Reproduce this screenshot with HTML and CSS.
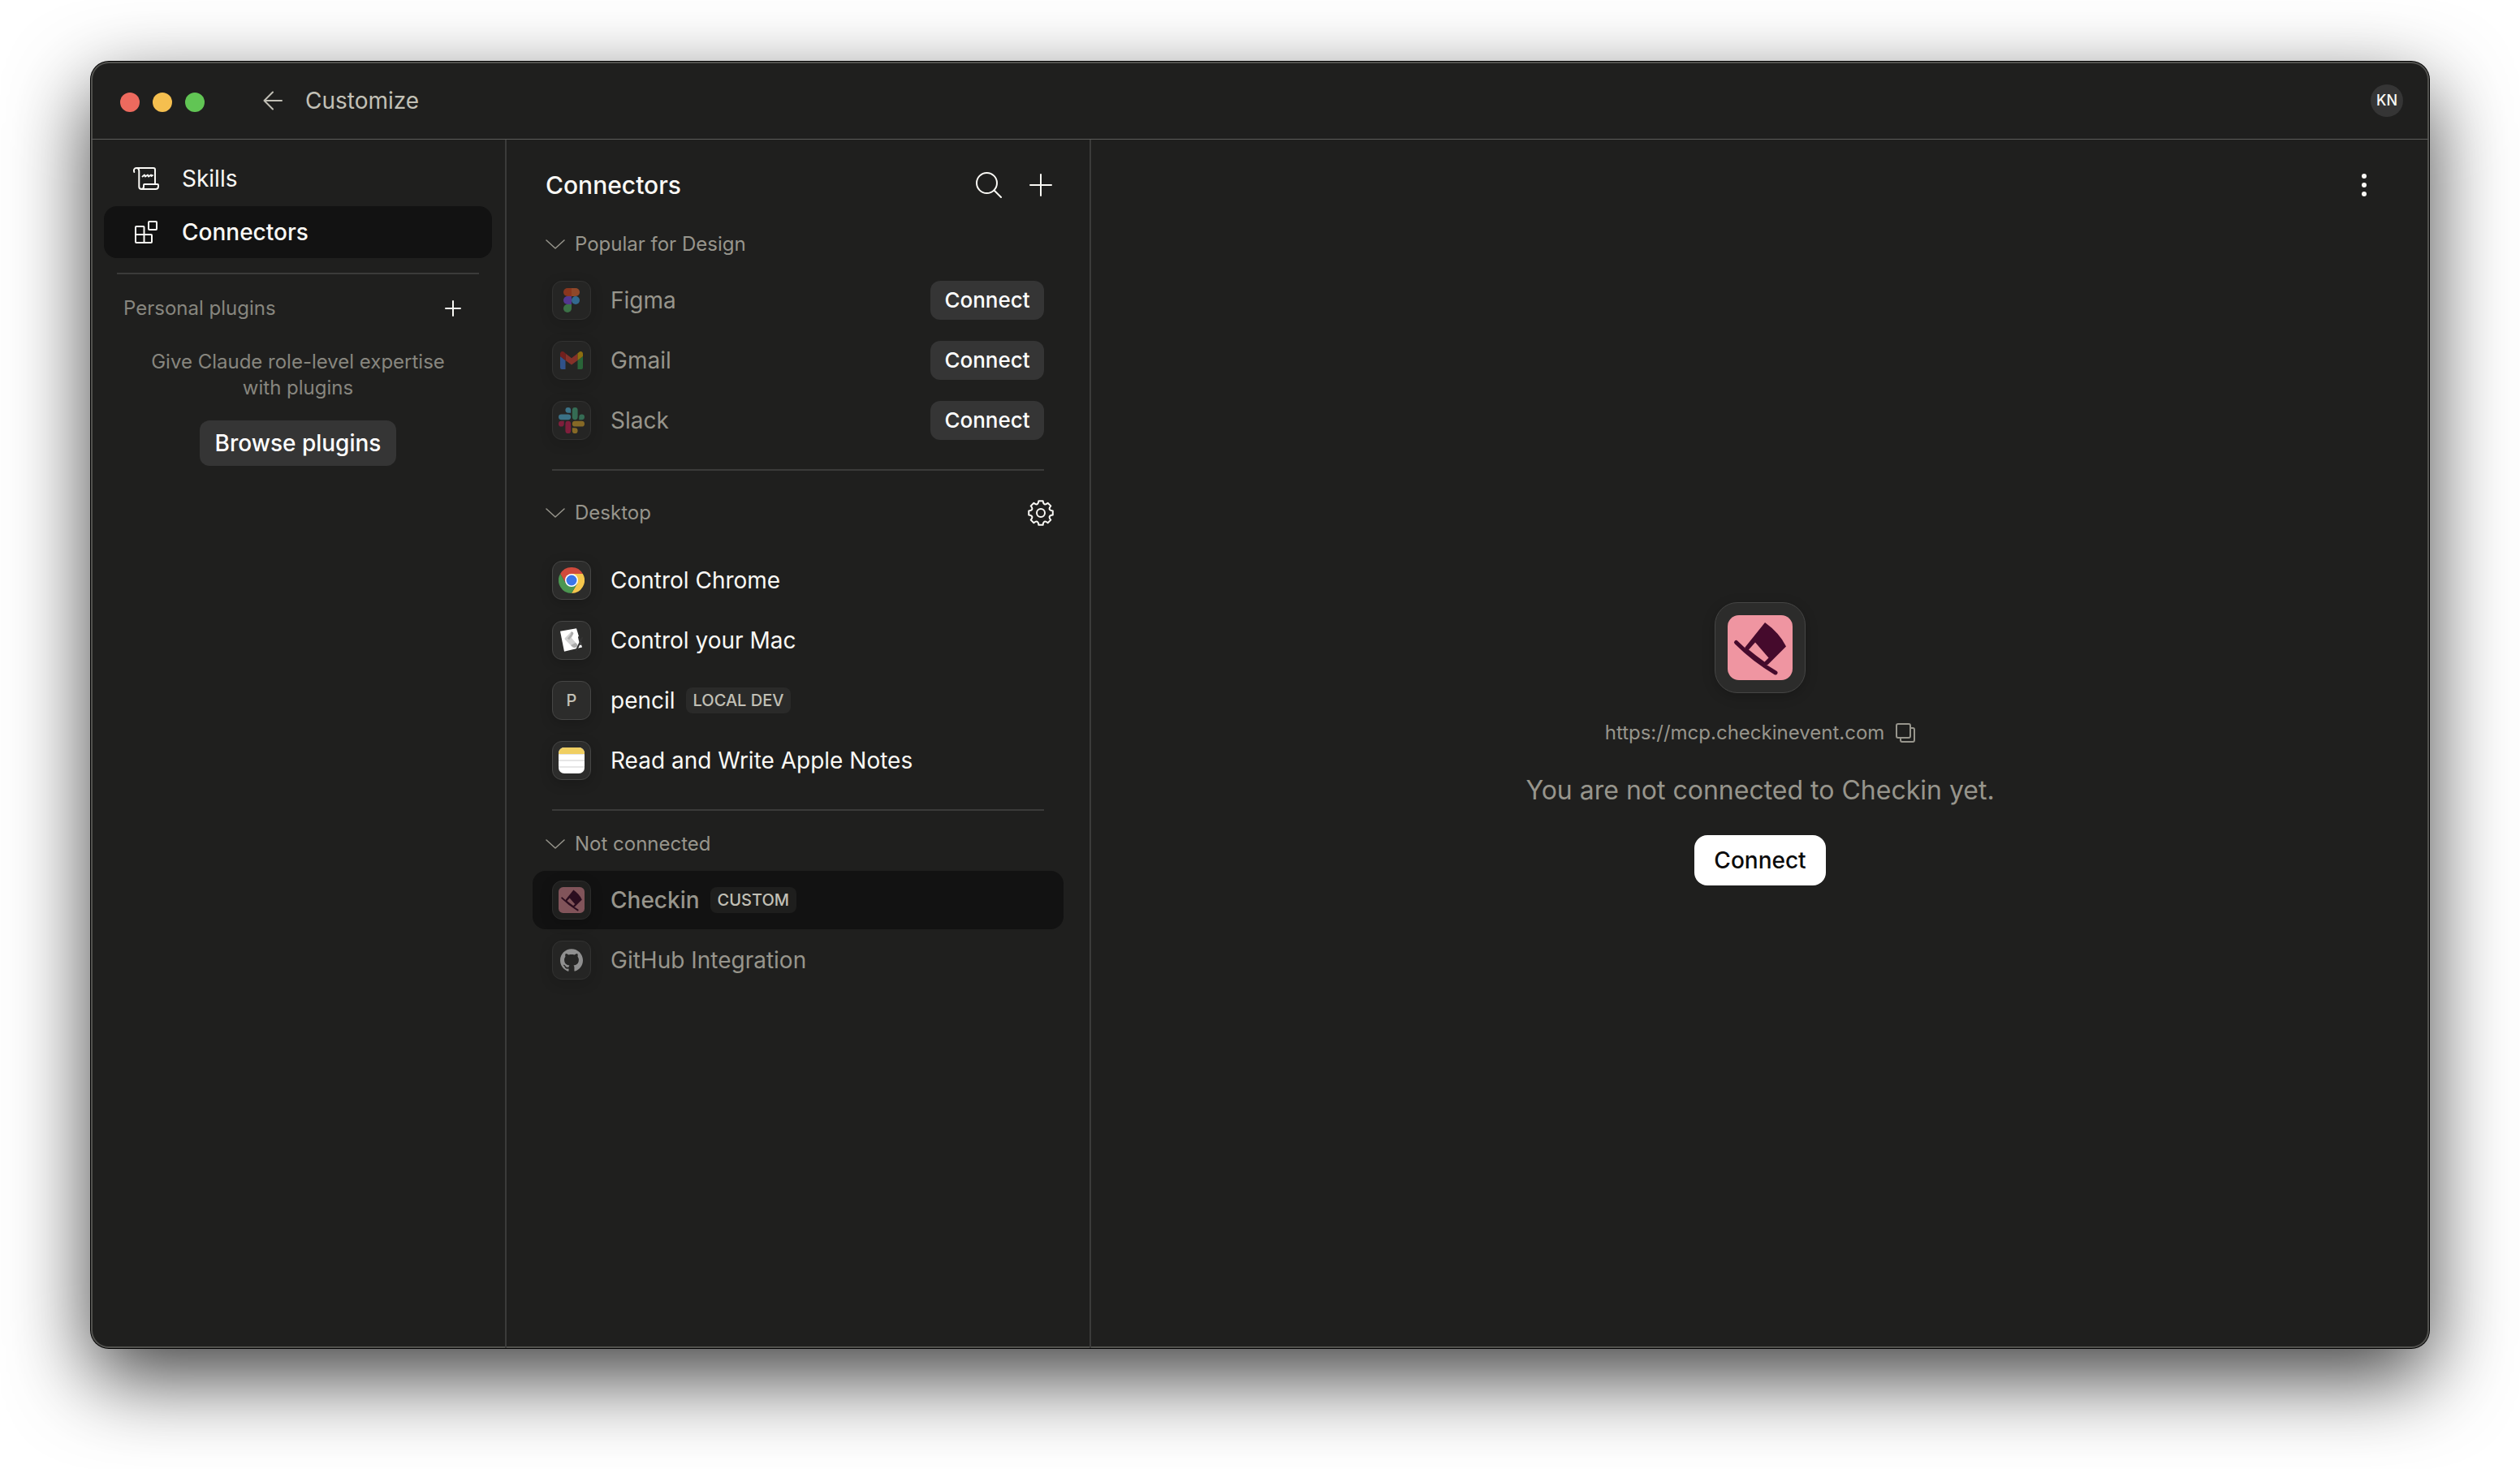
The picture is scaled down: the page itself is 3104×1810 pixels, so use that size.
FILE: index.html
```html
<!DOCTYPE html>
<html lang="en">
<head>
<meta charset="utf-8">
<meta name="viewport" content="width=device-width, initial-scale=1">
<title>Customize</title>
<link rel="stylesheet" href="styles.css">
</head>
<body>
<div class="window">
  <header class="titlebar">
    <div class="lights" aria-hidden="true">
      <span class="light light-close"></span>
      <span class="light light-minimize"></span>
      <span class="light light-zoom"></span>
    </div>
    <button class="icon-button back" aria-label="Back">
      <svg width="24" height="24" viewBox="0 0 24 24"><path d="M23 12H1.5M12 1.5 1.5 12 12 22.500" stroke-width="2"/></svg>
    </button>
    <h1 class="window-title">Customize</h1>
    <button class="avatar" aria-label="Account">KN</button>
  </header>

  <div class="panes">
    <nav class="sidebar" aria-label="Customize">
      <ul class="nav-list">
        <li><a class="nav-item" href="#skills">
          <svg width="32" height="32" viewBox="0 0 32 32"><path d="M1.300 8C.4 5 1.500 3 4 3H25a2 2 0 0 1 2 2V22.500M4 3C6.500 3 7.300 4.500 7.300 7V26a3 3 0 0 0 3 3H27.500C30 29 31 27.500 31 25.500V24a1 1 0 0 0-1-1H14a1 1 0 0 0-1 1V26a3 3 0 0 1-3 3" stroke-width="2"/><path d="M11.500 13.500l2.500-2 1 2 3-2 1 2 3-2 .5 1.500 1.500-1" stroke-width="2"/></svg>
          Skills</a></li>
        <li><a class="nav-item is-active" href="#connectors" aria-current="page">
          <svg width="32" height="32" viewBox="0 0 32 32"><path d="M4 9h8.500a1 1 0 0 1 1 1v9H22a1 1 0 0 1 1 1v8a1 1 0 0 1-1 1H4a1 1 0 0 1-1-1V10a1 1 0 0 1 1-1zM3 19h10.500v10" stroke-width="2"/><rect x="19" y="3" width="10" height="10" rx="1" stroke-width="2"/></svg>
          Connectors</a></li>
      </ul>
      <hr class="rule">
      <div class="plugins-head">
        <h2 class="label">Personal plugins</h2>
        <button class="icon-button" aria-label="Add plugin"><svg width="20" height="20" viewBox="0 0 20 20"><path d="M10 1v18M1 10h18" stroke-width="2"/></svg></button>
      </div>
      <div class="plugins-empty">
        <p>Give Claude role-level expertise with plugins</p>
        <button class="button button-browse">Browse plugins</button>
      </div>
    </nav>

    <section class="connectors" aria-labelledby="connectors-title">
      <header class="pane-head">
        <h2 class="pane-title" id="connectors-title">Connectors</h2>
        <div class="actions">
          <button class="icon-button" aria-label="Search"><svg width="32" height="32" viewBox="0 0 32 32"><circle cx="13.500" cy="13.500" r="12.500" stroke-width="2"/><path d="M22.500 22.500 31 31" stroke-width="2"/></svg></button>
          <button class="icon-button" aria-label="Add connector"><svg width="32" height="32" viewBox="0 0 32 32"><path d="M16 3v26M3 16h26" stroke-width="2"/></svg></button>
        </div>
      </header>

      <div class="group">
        <div class="group-head">
          <button class="toggle" aria-expanded="true"><svg width="24" height="24" viewBox="0 0 24 24"><path d="M1 7 12 17 23 7" stroke-width="1.500"/></svg>Popular for Design</button>
        </div>
        <ul class="rows">
          <li class="row is-off">
            <span class="tile"><svg width="20" height="30" viewBox="0 0 20 30"><g stroke="none"><path fill="#f24e1e" d="M5 0h5v10H5A5 5 0 0 1 5 0z"/><path fill="#ff7237" d="M10 0h5a5 5 0 0 1 0 10h-5z"/><path fill="#874fff" d="M5 10h5v10H5a5 5 0 0 1 0-10z"/><circle fill="#47b2ff" cx="15" cy="15" r="5"/><path fill="#58c26e" d="M5 20h5v5a5 5 0 1 1-5-5z"/></g></svg></span>
            <a class="name" href="#figma">Figma</a><button class="button button-small">Connect</button>
          </li>
          <li class="row is-off">
            <span class="tile"><svg width="28" height="22" viewBox="0 0 28 22"><g stroke="none"><path fill="#4285f4" d="M0 6l6.500 5V22H2a2 2 0 0 1-2-2z"/><path fill="#34a853" d="M28 6l-6.500 5V22H26a2 2 0 0 0 2-2z"/><path fill="#ea4335" d="M6.500 2.500 14 8.300l7.500-5.800V11L14 16.500 6.500 11z"/><path fill="#c5221f" d="M0 3C0 .2 3-.8 5 1l1.500 1.500V11L0 6z"/><path fill="#fbbc04" d="M28 3C28 .2 25-.8 23 1l-1.500 1.500V11L28 6z"/></g></svg></span>
            <a class="name" href="#gmail">Gmail</a><button class="button button-small">Connect</button>
          </li>
          <li class="row is-off">
            <span class="tile"><svg width="32" height="32" viewBox="0 0 24 24"><g stroke="none"><path fill="#e01e5a" d="M5.042 15.165a2.528 2.528 0 0 1-2.520 2.523A2.528 2.528 0 0 1 0 15.165a2.527 2.527 0 0 1 2.522-2.520h2.520v2.520zM6.313 15.165a2.527 2.527 0 0 1 2.521-2.520 2.527 2.527 0 0 1 2.521 2.520v6.313A2.528 2.528 0 0 1 8.834 24a2.528 2.528 0 0 1-2.521-2.522v-6.313z"/><path fill="#57c4f0" d="M8.834 5.042a2.528 2.528 0 0 1-2.521-2.520A2.528 2.528 0 0 1 8.834 0a2.528 2.528 0 0 1 2.521 2.522v2.520H8.834zM8.834 6.313a2.528 2.528 0 0 1 2.521 2.521 2.528 2.528 0 0 1-2.521 2.521H2.522A2.528 2.528 0 0 1 0 8.834a2.528 2.528 0 0 1 2.522-2.521h6.312z"/><path fill="#4cb98a" d="M18.956 8.834a2.528 2.528 0 0 1 2.522-2.521A2.528 2.528 0 0 1 24 8.834a2.528 2.528 0 0 1-2.522 2.521h-2.522V8.834zM17.688 8.834a2.528 2.528 0 0 1-2.523 2.521 2.527 2.527 0 0 1-2.520-2.521V2.522A2.527 2.527 0 0 1 15.165 0a2.528 2.528 0 0 1 2.523 2.522v6.312z"/><path fill="#ecb22e" d="M15.165 18.956a2.528 2.528 0 0 1 2.523 2.522A2.528 2.528 0 0 1 15.165 24a2.527 2.527 0 0 1-2.520-2.522v-2.522h2.520zM15.165 17.688a2.527 2.527 0 0 1-2.520-2.523 2.526 2.526 0 0 1 2.520-2.520h6.313A2.527 2.527 0 0 1 24 15.165a2.528 2.528 0 0 1-2.522 2.523h-6.313z"/></g></svg></span>
            <a class="name" href="#slack">Slack</a><button class="button button-small">Connect</button>
          </li>
        </ul>
      </div>

      <hr class="rule">

      <div class="group">
        <div class="group-head group-head-tall">
          <button class="toggle" aria-expanded="true"><svg width="24" height="24" viewBox="0 0 24 24"><path d="M1 7 12 17 23 7" stroke-width="1.500"/></svg>Desktop</button>
          <button class="icon-button" aria-label="Desktop settings"><svg width="32" height="32" viewBox="0 0 32 32"><path d="M13.400 1.200h5.200C18.900 4 19.200 4.700 20.600 5.300 22 5.800 22.600 5.400 24.600 3.700L28.300 7.400C26.600 9.400 26.200 10 26.700 11.400 27.300 12.800 28 13.100 30.800 13.400v5.200C28 18.900 27.300 19.200 26.700 20.600 26.200 22 26.600 22.600 28.300 24.600L24.600 28.300C22.600 26.600 22 26.200 20.600 26.700 19.200 27.300 18.900 28 18.600 30.800h-5.200C13.100 28 12.800 27.300 11.400 26.700 10 26.200 9.400 26.600 7.400 28.300L3.700 24.600C5.400 22.600 5.800 22 5.300 20.600 4.700 19.200 4 18.900 1.200 18.600v-5.200C4 13.100 4.700 12.800 5.300 11.400 5.800 10 5.400 9.400 3.700 7.400L7.400 3.700C9.400 5.400 10 5.800 11.400 5.300 12.800 4.700 13.100 4 13.400 1.200z" stroke-width="2"/><circle cx="16" cy="16" r="5" stroke-width="2"/></svg></button>
        </div>
        <ul class="rows">
          <li class="row">
            <span class="tile"><svg width="32" height="32" viewBox="0 0 32 32"><g stroke="none"><path fill="#d04a3c" d="M2.140 8A16 16 0 0 1 29.860 8H16V16L9.070 20z"/><path fill="#f4c64c" d="M16 8H29.860A16 16 0 0 1 16 32L22.930 20 16 16z"/><path fill="#4b9650" d="M2.140 8 9.070 20 16 16 22.930 20 16 32A16 16 0 0 1 2.140 8z"/></g><circle cx="16" cy="16" r="8" fill="#fff" stroke="none"/><circle cx="16" cy="16" r="6.500" fill="#3b76e8" stroke="none"/></svg></span>
            <a class="name" href="#control-chrome">Control Chrome</a>
          </li>
          <li class="row">
            <span class="tile"><svg width="32" height="32" viewBox="0 0 32 32"><g stroke="none"><path fill="#fff" d="M2 4.700 22 1.300 29 24.500 7 29.700z"/><path fill="#d2d2d2" d="M15.500 5.500c2-.5 3.500 1 2.500 3l-2 4.500 7 8c1 2-1 4-4 4-2 0-3-1-4-3l-6-6c-2-1-2-3 0-4z"/><path fill="#9b9b9b" d="M15.500 5.500c2-.5 3.500 1 2.500 3l-5 7-2-2 4-5zM15 22l6-3 2 2c1 2-1 4-4 4z" opacity=".7"/></g><path stroke="#333" stroke-width="2" d="M29 13 22 28M25 12l2 9"/></svg></span>
            <a class="name" href="#control-mac">Control your Mac</a>
          </li>
          <li class="row">
            <span class="tile">P</span>
            <a class="name" href="#pencil">pencil</a><span class="badge">LOCAL DEV</span>
          </li>
          <li class="row">
            <span class="tile"><svg width="32" height="32" viewBox="0 0 32 32"><g stroke="none"><rect width="32" height="32" rx="7" fill="#fff"/><path fill="#f0cf62" d="M0 8V7a7 7 0 0 1 7-7h18a7 7 0 0 1 7 7v1z"/><path fill="#e6e6e6" d="M0 8h32v1H0zM0 15h32v2H0zM0 23h32v2H0z"/></g></svg></span>
            <a class="name" href="#apple-notes">Read and Write Apple Notes</a>
          </li>
        </ul>
      </div>

      <hr class="rule">

      <div class="group">
        <div class="group-head">
          <button class="toggle" aria-expanded="true"><svg width="24" height="24" viewBox="0 0 24 24"><path d="M1 7 12 17 23 7" stroke-width="1.500"/></svg>Not connected</button>
        </div>
        <ul class="rows">
          <li class="row is-off is-active">
            <span class="tile"><svg width="32" height="32" viewBox="0 0 80 80"><rect width="80" height="80" rx="14" fill="#ef95a1" stroke="none"/><path fill="#450a2c" stroke="none" d="M46 9Q64 22 72 38.500L49.500 61 44 62 21.500 43V39.500z"/><path fill="#ef95a1" stroke="none" d="M34 33.500 50.500 52.500 45.500 57.500Q35 50 26 42.500z"/><path stroke="#450a2c" stroke-width="5" d="M10.500 33.500Q32 55 59 71"/></svg></span>
            <a class="name" href="#checkin" aria-current="true">Checkin</a><span class="badge">CUSTOM</span>
          </li>
          <li class="row is-off">
            <span class="tile"><svg width="28" height="28" viewBox="0 0 24 24"><path fill="#fff" stroke="none" d="M12 .297c-6.630 0-12 5.373-12 12 0 5.303 3.438 9.800 8.205 11.385.6.113.82-.258.82-.577 0-.285-.01-1.040-.015-2.040-3.338.724-4.042-1.610-4.042-1.610C4.422 18.070 3.633 17.700 3.633 17.700c-1.087-.744.084-.729.084-.729 1.205.084 1.838 1.236 1.838 1.236 1.070 1.835 2.809 1.305 3.495.998.108-.776.417-1.305.76-1.605-2.665-.3-5.466-1.332-5.466-5.930 0-1.310.465-2.380 1.235-3.220-.135-.303-.54-1.523.105-3.176 0 0 1.005-.322 3.300 1.230.96-.267 1.980-.399 3-.405 1.020.006 2.040.138 3 .405 2.280-1.552 3.285-1.230 3.285-1.230.645 1.653.24 2.873.12 3.176.765.840 1.230 1.910 1.230 3.220 0 4.610-2.805 5.625-5.475 5.920.42.360.81 1.096.81 2.220 0 1.606-.015 2.896-.015 3.286 0 .315.210.69.825.57C20.565 22.092 24 17.592 24 12.297c0-6.627-5.373-12-12-12"/></svg></span>
            <a class="name" href="#github">GitHub Integration</a>
          </li>
        </ul>
      </div>
    </section>

    <main class="detail">
      <button class="icon-button more" aria-label="More options"><svg width="32" height="32" viewBox="0 0 32 32"><g fill="currentColor" stroke="none"><circle cx="16" cy="5" r="3"/><circle cx="16" cy="16" r="3"/><circle cx="16" cy="27" r="3"/></g></svg></button>
      <div class="status">
        <span class="tile tile-large"><svg width="80" height="80" viewBox="0 0 80 80"><rect width="80" height="80" rx="14" fill="#ef95a1" stroke="none"/><path fill="#450a2c" stroke="none" d="M46 9Q64 22 72 38.500L49.500 61 44 62 21.500 43V39.500z"/><path fill="#ef95a1" stroke="none" d="M34 33.500 50.500 52.500 45.500 57.500Q35 50 26 42.500z"/><path stroke="#450a2c" stroke-width="5" d="M10.500 33.500Q32 55 59 71"/></svg></span>
        <div class="address">
          <span>https://mcp.checkinevent.com</span>
          <button class="icon-button" aria-label="Copy address"><svg width="24" height="24" viewBox="0 0 24 24"><rect x="1" y="1" width="17" height="17" rx="2" stroke-width="2"/><path d="M6 18v3a2 2 0 0 0 2 2h13a2 2 0 0 0 2-2V8a2 2 0 0 0-2-2h-3" stroke-width="2"/></svg></button>
        </div>
        <p class="message">You are not connected to Checkin yet.</p>
        <button class="button button-primary">Connect</button>
      </div>
    </main>
  </div>
</div>
</body>
</html>
```
FILE: styles.css
```css
:root {
  --bg: #1f1f1e;
  --bg-active: #121212;
  --surface: #353535;
  --tile: #2c2c2b;
  --line: #3b3b3a;
  --text: #faf9f5;
  --text-soft: #c2c0b6;
  --text-muted: #97958c;
  --text-faint: #87867f;
}

* {
  box-sizing: border-box;
}

body {
  margin: 0;
  min-height: 100vh;
  padding: 76px 112px 149px;
  display: flex;
  background: #fff;
  color: var(--text);
  font-family: Inter, "Liberation Sans", sans-serif;
  font-size: 28px;
  line-height: 40px;
}

h1, h2, p, ul {
  margin: 0;
  padding: 0;
  font-size: inherit;
  font-weight: 400;
}

ul {
  list-style: none;
}

a {
  color: inherit;
  text-decoration: none;
}

button {
  margin: 0;
  padding: 0;
  border: 0;
  background: none;
  color: inherit;
  font: inherit;
}

svg {
  display: block;
  flex: none;
  fill: none;
  stroke: currentColor;
  stroke-linecap: round;
  stroke-linejoin: round;
}

.window {
  flex: 1;
  display: flex;
  flex-direction: column;
  border-radius: 22px;
  background: var(--bg);
  box-shadow:
    inset 0 0 0 2px #52524f,
    0 0 0 1px #000,
    0 36px 100px rgba(0, 0, 0, 0.75);
}

/* Title bar */

.titlebar {
  display: flex;
  align-items: center;
  height: 96px;
  padding: 0 32px 0 36px;
  border-bottom: 1px solid #5c5c5a;
}

.lights {
  display: flex;
  gap: 16px;
  padding-top: 4px;
}

.light {
  width: 24px;
  height: 24px;
  border-radius: 50%;
}

.light-close { background: #ed6a5e; }
.light-minimize { background: #f5bf4f; }
.light-zoom { background: #61c554; }

.icon-button {
  display: grid;
  place-items: center;
}

.back {
  margin: 0 28px 0 72px;
  color: var(--text-soft);
}

.window-title {
  color: var(--text-soft);
}

.avatar {
  width: 40px;
  height: 40px;
  margin-left: auto;
  border-radius: 50%;
  background: var(--surface);
  font-size: 18px;
  font-weight: 500;
}

/* Panes */

.panes {
  flex: 1;
  display: grid;
  grid-template-columns: 512px 720px 1fr;
}

.sidebar,
.connectors {
  border-right: 2px solid var(--line);
}

.rule {
  height: 2px;
  margin: 24px;
  border: 0;
  background: var(--line);
}

/* Sidebar */

.sidebar {
  padding: 16px;
}

.nav-list {
  display: grid;
  gap: 2px;
}

.nav-item {
  display: flex;
  align-items: center;
  gap: 28px;
  height: 64px;
  padding: 0 36px;
  border-radius: 16px;
}

.nav-item.is-active {
  background: var(--bg-active);
  font-weight: 500;
}

.sidebar .rule {
  margin: 18px 16px;
}

.plugins-head {
  display: flex;
  align-items: center;
  justify-content: space-between;
  height: 48px;
  padding: 0 38px 0 24px;
}

.label {
  color: var(--text-faint);
  font-size: 24px;
  line-height: 32px;
}

.plugins-empty {
  display: flex;
  flex-direction: column;
  align-items: center;
  gap: 24px;
  padding: 26px 48px;
  color: var(--text-faint);
  font-size: 24px;
  line-height: 32px;
  text-align: center;
}

/* Buttons */

.button {
  border-radius: 12px;
  background: var(--surface);
  color: #fff;
  font-weight: 500;
}

.button-browse {
  height: 56px;
  padding: 0 19px;
  font-size: 28px;
}

.button-small {
  width: 140px;
  height: 48px;
  margin-left: auto;
  font-size: 26px;
}

.button-primary {
  height: 62px;
  padding: 0 24px;
  border-radius: 16px;
  background: #fff;
  color: #0b0b0b;
}

/* Connector list */

.connectors {
  padding: 0 32px;
}

.pane-head {
  display: flex;
  align-items: center;
  justify-content: space-between;
  height: 112px;
  padding: 0 12px 0 16px;
}

.pane-title {
  font-size: 30px;
  font-weight: 500;
}

.actions {
  display: flex;
  gap: 32px;
}

.group-head {
  display: flex;
  align-items: center;
  justify-content: space-between;
  height: 34px;
  margin-bottom: 16px;
  padding: 0 12px 0 16px;
}

.group-head-tall {
  height: 56px;
  margin-bottom: 19px;
}

.toggle {
  display: flex;
  align-items: center;
  gap: 12px;
  color: var(--text-muted);
  font-size: 24px;
  line-height: 34px;
}

.rows {
  display: grid;
  gap: 2px;
}

.row {
  display: flex;
  align-items: center;
  height: 72px;
  padding: 0 24px;
  border-radius: 16px;
}

.row.is-active {
  background: var(--bg-active);
  font-weight: 500;
}

.tile {
  flex: none;
  display: grid;
  place-items: center;
  width: 48px;
  height: 48px;
  border: 1px solid #464645;
  border-radius: 12px;
  background: var(--tile);
  box-shadow: 0 4px 16px rgba(0, 0, 0, 0.2);
  color: var(--text-soft);
  font-size: 20px;
  font-weight: 500;
}

.is-off .tile {
  opacity: 0.5;
}

.name {
  margin-left: 24px;
}

.is-off .name {
  color: var(--text-muted);
}

.badge {
  height: 32px;
  margin-left: 13px;
  padding: 0 9px;
  border-radius: 8px;
  background: #2a2a29;
  color: var(--text-soft);
  font-size: 20px;
  font-weight: 500;
  line-height: 32px;
}

.is-active .badge {
  background: #1e1e1d;
}

/* Detail pane */

.detail {
  display: grid;
}

.more {
  grid-area: 1 / 1;
  place-self: start end;
  margin: 40px 64px;
}

.status {
  grid-area: 1 / 1;
  place-self: center;
  display: flex;
  flex-direction: column;
  align-items: center;
  color: var(--text-muted);
}

.tile-large {
  width: 112px;
  height: 112px;
  border-radius: 28px;
}

.address {
  display: flex;
  align-items: center;
  gap: 14px;
  margin: 33px 0;
  font-size: 24px;
  line-height: 32px;
}

.message {
  margin-bottom: 33px;
  font-size: 32px;
  line-height: 44px;
}
```
